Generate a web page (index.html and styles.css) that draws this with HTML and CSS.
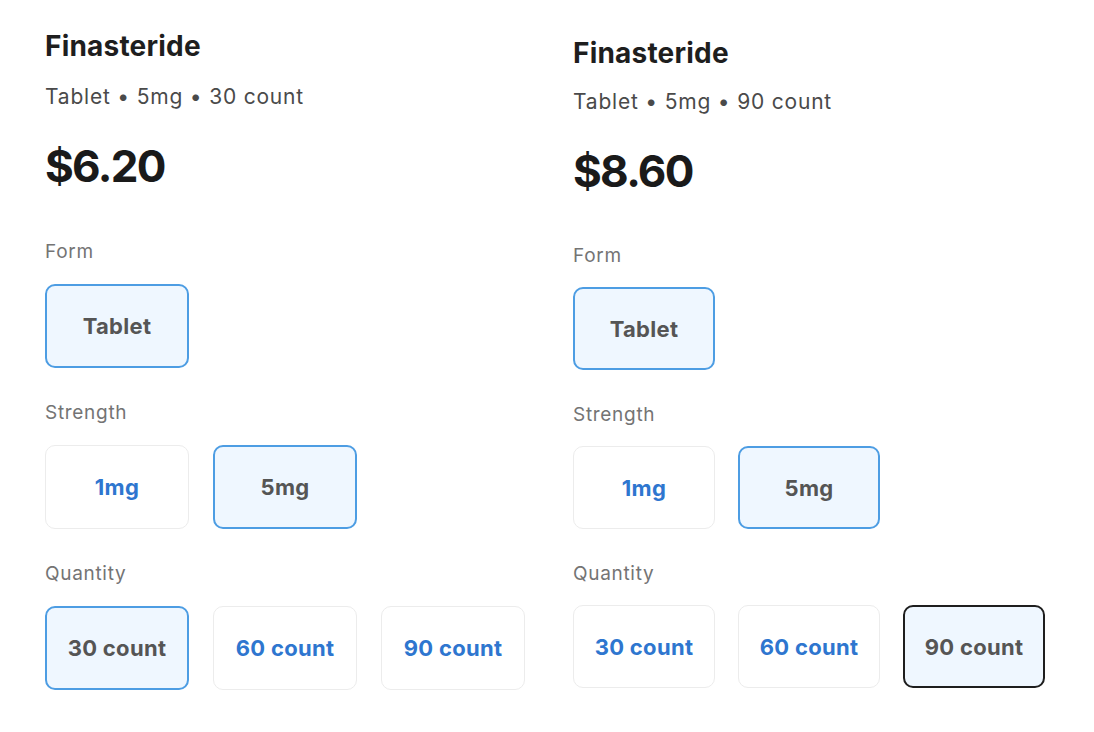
FILE: index.html
```html
<!DOCTYPE html>
<html>
<head>
<meta charset="utf-8">
<link rel="stylesheet" href="styles.css">
</head>
<body>
<div class="page">
  <section class="product">
    <h1 class="title">Finasteride</h1>
    <p class="summary">Tablet • 5mg • 30 count</p>
    <div class="price">$6.20</div>
    <div class="group">
      <div class="label">Form</div>
      <div class="options">
        <button class="opt selected">Tablet</button>
      </div>
    </div>
    <div class="group">
      <div class="label">Strength</div>
      <div class="options">
        <button class="opt">1mg</button>
        <button class="opt selected">5mg</button>
      </div>
    </div>
    <div class="group">
      <div class="label">Quantity</div>
      <div class="options">
        <button class="opt selected">30 count</button>
        <button class="opt">60 count</button>
        <button class="opt">90 count</button>
      </div>
    </div>
  </section>
  <section class="product product-alt">
    <h1 class="title">Finasteride</h1>
    <p class="summary">Tablet • 5mg • 90 count</p>
    <div class="price">$8.60</div>
    <div class="group">
      <div class="label">Form</div>
      <div class="options">
        <button class="opt selected">Tablet</button>
      </div>
    </div>
    <div class="group">
      <div class="label">Strength</div>
      <div class="options">
        <button class="opt">1mg</button>
        <button class="opt selected">5mg</button>
      </div>
    </div>
    <div class="group">
      <div class="label">Quantity</div>
      <div class="options">
        <button class="opt">30 count</button>
        <button class="opt">60 count</button>
        <button class="opt focused">90 count</button>
      </div>
    </div>
  </section>
</div>
</body>
</html>
```
FILE: styles.css
```css
* { box-sizing: border-box; }
html, body { margin: 0; padding: 0; background: #fff; }
body { font-family: Inter, "Noto Sans", sans-serif; color: #1c1c1c; }
.page { display: flex; padding: 28px 0 0 45px; }
.product { width: 528px; flex: 0 0 528px; }
.title { margin: 0; font-size: 28px; line-height: 36px; font-weight: 700; color: #1e1e1e; letter-spacing: 0.2px; }
.summary { margin: 19px 0 0; font-size: 21px; line-height: 28px; color: #4a4a4a; letter-spacing: 0.8px; }
.price { margin-top: 29px; font-size: 44px; line-height: 52px; font-weight: 700; color: #1a1a1a; letter-spacing: -1.7px; }
.group { margin-top: 49px; }
.product .group + .group { margin-top: 34px; }
.label { font-size: 19px; line-height: 22px; color: #747474; letter-spacing: 0.7px; }
.options { display: flex; gap: 24px; margin-top: 21px; }
.opt {
  width: 144px; height: 84px;
  border: 1px solid #ececec; border-radius: 10px;
  background: #fff;
  font-family: inherit; font-size: 22px; font-weight: 700;
  color: #2e76cf; letter-spacing: 0.3px;
  display: flex; align-items: center; justify-content: center;
  padding: 0;
}
.opt.selected { border: 2px solid #4d9de3; background: #eff7ff; color: #555; }
.opt.focused { border: 2px solid #1e1e1e; background: #eff7ff; color: #555; }

.product-alt .title { margin-top: 7px; }
.product-alt .summary { margin-top: 17px; }
.product-alt .group { margin-top: 48px; }
.product-alt .group + .group { margin-top: 34px; }
.product-alt .options { margin-top: 20px; gap: 23px; }
.product-alt .opt { width: 142px; height: 83px; }
```
